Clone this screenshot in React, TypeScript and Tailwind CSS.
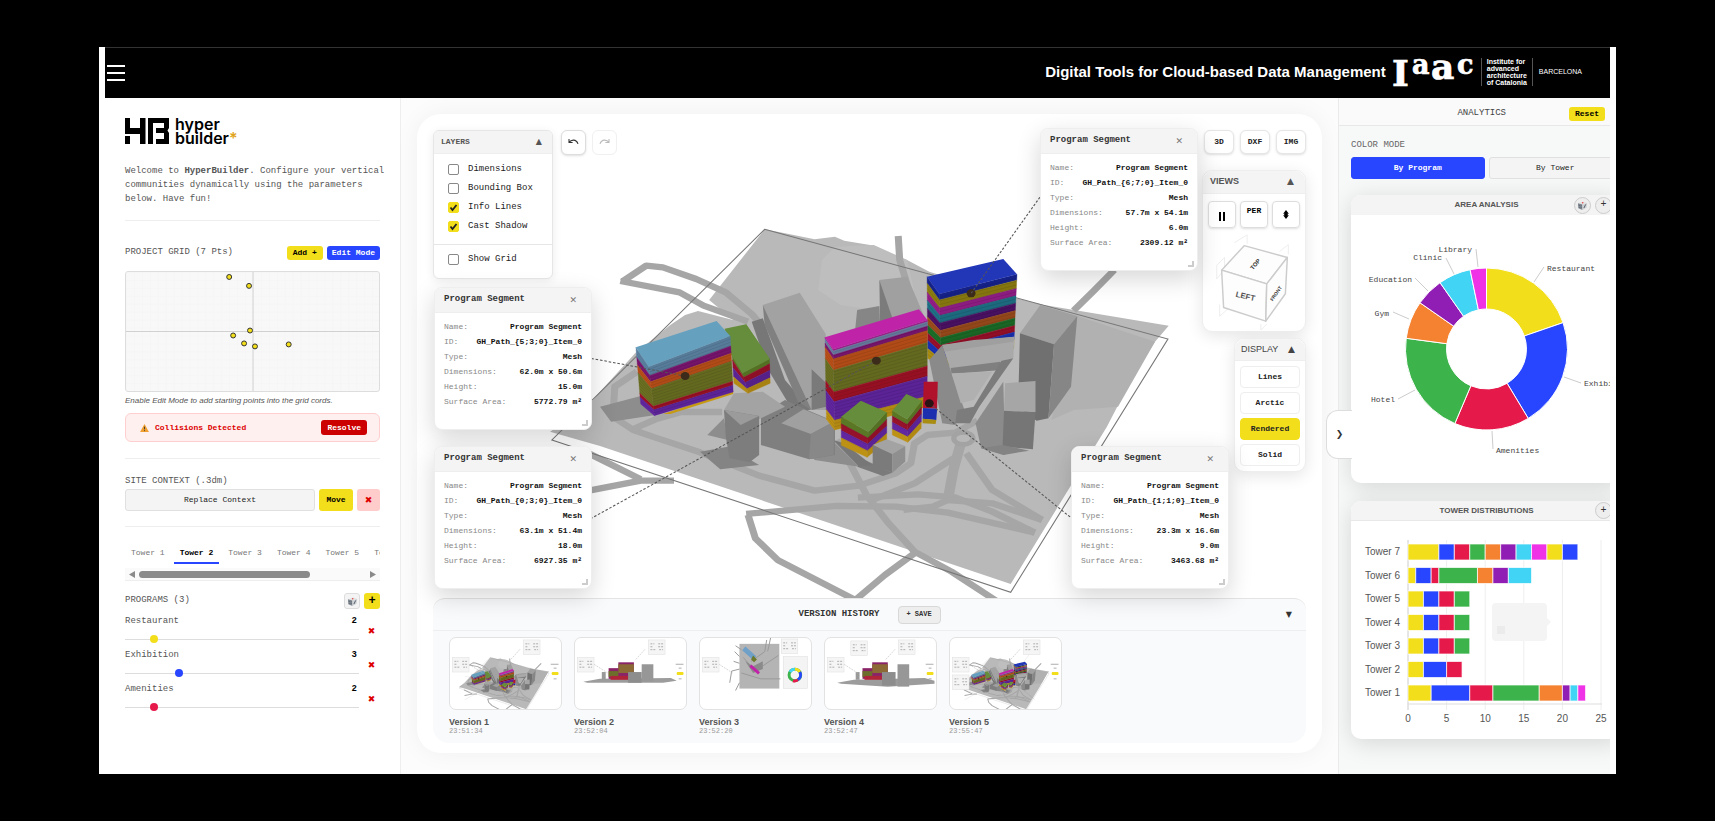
import { useState } from 'react'
import clsx from 'clsx'

type Pt = [number, number]

const COLORS = {
  yellow: '#f2de1b',
  blue: '#2846ff',
  red: '#e6194b',
  green: '#3cb44b',
  orange: '#f58231',
  purple: '#911eb4',
  cyan: '#42d4f4',
  magenta: '#f032e6',
}

const gridPoints: Pt[] = [
  [104, 5],
  [124, 14],
  [125, 59],
  [108, 64],
  [119, 72],
  [130, 75],
  [164, 73],
]

const programs = [
  { name: 'Restaurant', value: 2, thumb: '[&::-webkit-slider-thumb]:bg-[#f2de1b]' },
  { name: 'Exhibition', value: 3, thumb: '[&::-webkit-slider-thumb]:bg-[#2846ff]' },
  { name: 'Amenities', value: 2, thumb: '[&::-webkit-slider-thumb]:bg-[#e6194b]' },
]

const segments = [
  { id: 'GH_Path_{5;3;0}_Item_0', dimensions: '62.0m x 50.6m', height: '15.0m', area: '5772.79 m²', place: 'left-[17px] top-[173px]' },
  { id: 'GH_Path_{0;3;0}_Item_0', dimensions: '63.1m x 51.4m', height: '18.0m', area: '6927.35 m²', place: 'left-[17px] top-[332px]' },
  { id: 'GH_Path_{6;7;0}_Item_0', dimensions: '57.7m x 54.1m', height: '6.0m', area: '2309.12 m²', place: 'right-[124px] top-[14px]' },
  { id: 'GH_Path_{1;1;0}_Item_0', dimensions: '23.3m x 16.6m', height: '9.0m', area: '3463.68 m²', place: 'right-[93px] top-[332px]' },
]

const areas = [
  { name: 'Restaurant', degrees: 71, color: COLORS.yellow, line: [183, 67, 193, 52], x: 196, y: 56, anchor: 'start' },
  { name: 'Exhibition', degrees: 78, color: COLORS.blue, line: [213, 162, 230, 168], x: 233, y: 171, anchor: 'start' },
  { name: 'Amenities', degrees: 54, color: COLORS.red, line: [141, 216, 142, 234], x: 145, y: 238, anchor: 'start' },
  { name: 'Hotel', degrees: 74.6, color: COLORS.green, line: [64, 175, 47, 184], x: 44, y: 187, anchor: 'end' },
  { name: 'Gym', degrees: 27.2, color: COLORS.orange, line: [58, 104, 42, 97], x: 38, y: 101, anchor: 'end' },
  { name: 'Education', degrees: 20.2, color: COLORS.purple, line: [77, 76, 64, 63], x: 61, y: 67, anchor: 'end' },
  { name: 'Clinic', degrees: 23.3, color: COLORS.cyan, line: [103, 59, 95, 43], x: 91, y: 45, anchor: 'end' },
  { name: 'Library', degrees: 11.7, color: COLORS.magenta, line: [127, 52, 125, 34], x: 121, y: 37, anchor: 'end' },
] as const

const barColors = [COLORS.yellow, COLORS.blue, COLORS.red, COLORS.green, COLORS.orange, COLORS.purple, COLORS.cyan, COLORS.magenta]

const towers = [
  { name: 'Tower 7', values: [4, 2, 2, 2, 2, 2, 2, 2, 2, 2] },
  { name: 'Tower 6', values: [1, 2, 1, 5, 2, 2, 3] },
  { name: 'Tower 5', values: [2, 2, 2, 2] },
  { name: 'Tower 4', values: [2, 2, 2, 2] },
  { name: 'Tower 3', values: [2, 2, 2, 2] },
  { name: 'Tower 2', values: [2, 3, 2] },
  { name: 'Tower 1', values: [3, 5, 3, 6, 3, 1, 1, 1] },
]

const versions = [
  { name: 'Version 1', time: '23:51:34', view: 'iso' },
  { name: 'Version 2', time: '23:52:04', view: 'elevation' },
  { name: 'Version 3', time: '23:52:20', view: 'plan' },
  { name: 'Version 4', time: '23:52:47', view: 'elevation-wide' },
  { name: 'Version 5', time: '23:55:47', view: 'iso-full' },
]

function lerp(a: Pt, b: Pt, t: number): Pt {
  return [a[0] + (b[0] - a[0]) * t, a[1] + (b[1] - a[1]) * t]
}

function points(...list: Pt[]) {
  return list.map((p) => p.map((n) => Math.round(n * 10) / 10).join(',')).join(' ')
}

// A stacked building: left edge, front corner and right edge, each as [top, bottom]
function Tower({
  left,
  front,
  right,
  back,
  top,
  bands,
  floors = 0,
}: {
  left: [Pt, Pt]
  front: [Pt, Pt]
  right: [Pt, Pt]
  back: Pt
  top: string
  bands: [string, number][]
  floors?: number
}) {
  return (
    <g>
      {bands.map(([color, end], i) => {
        const start = i === 0 ? 0 : bands[i - 1][1]
        const l0 = lerp(left[0], left[1], start)
        const l1 = lerp(left[0], left[1], end)
        const f0 = lerp(front[0], front[1], start)
        const f1 = lerp(front[0], front[1], end)
        const r0 = lerp(right[0], right[1], start)
        const r1 = lerp(right[0], right[1], end)
        return (
          <g key={i} fill={color} stroke={color}>
            <polygon points={points(l0, f0, f1, l1)} />
            <polygon points={points(f0, r0, r1, f1)} />
          </g>
        )
      })}
      {Array.from({ length: floors }, (_, i) => {
        const t = (i + 1) / (floors + 1)
        return (
          <polyline
            key={i}
            points={points(lerp(left[0], left[1], t), lerp(front[0], front[1], t), lerp(right[0], right[1], t))}
            fill="none"
            stroke="#000"
            strokeOpacity="0.12"
            strokeWidth="2"
          />
        )
      })}
      <polygon points={points(front[0], right[0], right[1], front[1])} fill="#000" fillOpacity="0.06" />
      <polygon points={points(left[0], back, right[0], front[0])} fill={top} />
    </g>
  )
}

function SiteModel({ full = true }: { full?: boolean }) {
  return (
    <g transform="translate(600 210) scale(0.37 0.3333)">
      <polygon
        points="445,58 500,70 580,88 635,80 660,92 730,105 830,150 890,185 1125,265 1200,285 1537,347 1500,395 1440,500 1370,650 1110,1122 0,708 -135,665 -30,585 0,545 95,430 190,345 230,315 265,303 360,330 295,270"
        fill="#b9b9b9"
      />
      <polygon points="600,150 635,110 740,105 830,150 850,250 800,290 740,300 650,285 590,240" fill="#bebebe" />
      <polygon points="1290,318 1500,395 1400,590 1280,600 1220,630" fill="#b1b1b1" />
      <g fill="none" stroke="#a6a6a6" strokeWidth="19" strokeLinejoin="round">
        <polyline points="60,215 125,167 170,172 260,207 340,247 410,312 440,350" />
        <polyline points="55,213 215,247 280,287 400,335" />
        <polyline points="806,78 810,150 832,230 862,310" />
        <polyline points="1390,180 1335,242 1280,302" />
        <polyline points="100,485 40,530 35,620 90,660 150,683 270,727 430,797 580,842 700,827 800,790 840,760 850,700 885,675 960,668 1020,632" />
        <polyline points="90,657 150,628 220,606 330,606" />
        <polyline points="-40,725 110,808" />
        <polyline points="-30,842 110,812 200,812" />
        <polyline points="395,912 640,888 800,890 940,908 1175,968" />
        <polyline points="697,863 860,853 960,862 1060,905 1175,968" />
        <polyline points="400,915 420,985 480,1050 690,1170" />
        <polyline points="690,1170 770,1095 850,1030" />
        <polyline points="640,690 680,770 720,855 780,940 850,1025 950,1085 1070,1172" />
        <polyline points="975,700 955,780 940,870" strokeWidth="28" />
        <polyline points="990,730 1060,840 1195,930" />
        <polyline points="955,745 850,820 740,868" />
        <polyline points="940,870 900,890 820,900" />
        <polyline points="940,870 1060,880 1195,930" />
      </g>
      <ellipse cx="982" cy="685" rx="26" ry="18" fill="#b8b8b8" stroke="#a3a3a3" strokeWidth="14" />
      <polygon points="445,58 1535,387 1110,1147 -130,690" fill="none" stroke="#777" strokeWidth="3" />

      {/* cast shadows */}
      <g fill="#8d8d8d">
        <polygon points="0,590 110,558 150,615 30,635" />
        <polygon points="290,675 335,625 345,690" />
        <polygon points="270,725 345,710 430,765 325,778" fill="#848484" />
        <polygon points="635,700 700,770 580,750 565,720" />
        <polygon points="695,770 720,752 790,788 765,798" fill="#7b7b7b" />
        <polygon points="410,335 440,325 500,510 570,600 520,600 455,480" fill="#777" />
        <polygon points="630,690 660,700 735,765 700,770" fill="#777" />
      </g>

      {/* existing buildings */}
      <g>
        <polygon points="440,285 540,248 610,372 615,600 572,600" fill="#a2a2a2" />
        <polygon points="440,285 572,600 535,575 445,345" fill="#808080" />
        <polygon points="572,478 612,520 612,590 572,600" fill="#7a7a7a" />
        <polygon points="695,300 755,288 757,345 690,355" fill="#868686" />
        <polygon points="755,210 830,200 880,330 780,340" fill="#a0a0a0" />
        <polygon points="755,210 792,330 757,335" fill="#7b7b7b" />
        <polygon points="1135,370 1190,285 1290,318 1227,403" fill="#a0a0a0" />
        <polygon points="1135,370 1227,403 1212,625 1180,632 1130,590" fill="#707070" />
        <polygon points="1227,403 1290,318 1273,530 1212,625" fill="#868686" />
        <polygon points="1015,640 1090,515 1095,735 1030,715" fill="#8b8b8b" />
        <polygon points="1095,520 1177,513 1177,607 1092,602" fill="#a6a6a6" />
        <polygon points="1092,602 1177,607 1170,718 1088,710" fill="#767676" />
        <polygon points="1030,715 1088,705 1160,722 1090,735" fill="#838383" />
        <polygon points="435,615 500,570 560,600 635,635 635,735 565,748 435,705" fill="#7f7f7f" />
        <polygon points="490,640 550,598 632,635 570,672" fill="#a0a0a0" />
        <polygon points="570,672 632,635 632,735 565,748" fill="#888" />
        <polygon points="335,600 362,550 440,545 500,590 435,625 380,650" fill="#a3a3a3" />
        <polygon points="335,600 430,618 430,735 405,756 350,745 340,680" fill="#7d7d7d" />
        <polygon points="335,600 430,618 380,645" fill="#9b9b9b" />
      </g>

      <Tower
        left={[[357, 430], [362, 520]]}
        front={[[385, 488], [400, 550]]}
        right={[[458, 445], [460, 520]]}
        back={[395, 343]}
        top="#668d3b"
        bands={[['#5a7726', 0.22], ['#96122a', 0.48], ['#5b2391', 0.78], ['#b28a14', 1]]}
      />
      <polygon points="337,356 395,343 458,448 385,490 352,430" fill="#668d3b" />
      <polygon points="170,612 360,542 360,552 190,612" fill="#c79a14" />
      <Tower
        left={[[97, 412], [110, 582]]}
        front={[[132, 470], [147, 617]]}
        right={[[352, 378], [360, 546]]}
        back={[315, 333]}
        top="#66a0bf"
        bands={[['#5d84a4', 0.18], ['#7d1672', 0.31], ['#bb5019', 0.45], ['#6b7022', 0.81], ['#a01226', 0.88], ['#6126a0', 1]]}
        floors={17}
      />
      {full && (
        <>
          <Tower
            left={[[884, 200], [886, 445]]}
            front={[[917, 252], [922, 475]]}
            right={[[1127, 193], [1118, 415]]}
            back={[1090, 147]}
            top="#2236b8"
            bands={[
              ['#17248f', 0.08],
              ['#8d7d10', 0.19],
              ['#941e88', 0.29],
              ['#1f7086', 0.39],
              ['#4d1166', 0.49],
              ['#9c4c1c', 0.59],
              ['#1c6d28', 0.69],
              ['#9a102a', 0.78],
              ['#1b31b4', 0.88],
              ['#a98c12', 1],
            ]}
            floors={20}
          />
          <circle cx="1003" cy="250" r="12" fill="#3c2a1a" />
        </>
      )}

      {/* block behind the right tower */}
      <polygon points="925,405 1120,380 1117,445 1085,452 1082,478 948,482" fill="#a9a9a9" />
      <polygon points="925,405 1010,390 1120,380 1117,395 930,425" fill="#9f9f9f" />
      <polygon points="925,405 948,482 985,600 960,645 925,640 890,450" fill="#8a8a8a" />
      <polygon points="948,474 1082,455 1085,480 950,492" fill="#808080" />
      <polygon points="1085,452 1117,445 1025,590 1000,640 960,640 965,600 1010,590" fill="#7c7c7c" />
      <polygon points="950,490 1060,485 1010,570 975,580" fill="#b0b0b0" />

      <Tower
        left={[[608, 382], [612, 628]]}
        front={[[630, 418], [634, 660]]}
        right={[[885, 330], [884, 590]]}
        back={[862, 298]}
        top="#bf24a8"
        bands={[
          ['#a51e92', 0.02],
          ['#6c7fa4', 0.07],
          ['#7d1672', 0.12],
          ['#bb5019', 0.26],
          ['#6b7022', 0.53],
          ['#a01226', 0.65],
          ['#6126a0', 0.88],
          ['#bd9114', 1],
        ]}
        floors={24}
      />
      <g>
        <polygon points="875,515 913,515 911,596 873,594" fill="#b0122c" />
        <polygon points="873,594 911,596 909,630 872,626" fill="#1c2fae" />
        <polygon points="872,626 909,630 907,642 872,640" fill="#a98c12" />
      </g>
      <Tower
        left={[[652, 620], [652, 706]]}
        front={[[725, 665], [722, 742]]}
        right={[[775, 607], [775, 692]]}
        back={[705, 572]}
        top="#668d3b"
        bands={[['#5a7726', 0.25], ['#96122a', 0.48], ['#6126a0', 0.74], ['#bd9114', 1]]}
        floors={3}
      />
      <Tower
        left={[[790, 602], [790, 675]]}
        front={[[830, 628], [832, 697]]}
        right={[[870, 572], [868, 655]]}
        back={[828, 552]}
        top="#668d3b"
        bands={[['#5a7726', 0.22], ['#96122a', 0.48], ['#6126a0', 0.76], ['#bd9114', 1]]}
        floors={3}
      />
      <polygon points="737,705 775,688 825,708 790,732" fill="#a3a3a3" />
      <polygon points="737,705 790,732 790,788 737,765" fill="#7b7b7b" />
      <polygon points="790,732 825,708 825,755 790,788" fill="#8f8f8f" />

      <g fill="none" stroke="#555" strokeWidth="3" strokeDasharray="7 5">
        <line x1="230" y1="498" x2="-25" y2="445" />
        <line x1="747" y1="452" x2="-25" y2="926" />
        {full && <line x1="1003" y1="250" x2="1190" y2="-40" />}
        {full && <line x1="890" y1="580" x2="1276" y2="926" />}
      </g>
      <circle cx="230" cy="498" r="12" fill="#3c2a1a" />
      <circle cx="747" cy="452" r="12" fill="#3c2a1a" />
      {full && <circle cx="890" cy="580" r="12" fill="#2c1414" />}
    </g>
  )
}

function MiniCard({ x, y }: { x: number; y: number }) {
  return (
    <g>
      <rect x={x} y={y} width="17" height="15" fill="#f5f5f5" stroke="#ddd" strokeWidth="0.5" />
      <path d={`M${x + 2} ${y + 4}h4m4 0h5M${x + 2} ${y + 7}h3m5 0h5M${x + 2} ${y + 10}h5m4 0h4`} stroke="#999" strokeWidth="0.8" strokeDasharray="2 1" />
    </g>
  )
}

function Elevation({ wide }: { wide: boolean }) {
  return (
    <g transform={wide ? 'translate(4 0)' : undefined}>
      <polygon points={wide ? '8,46 25,43 98,41 108,44 108,47 60,50 12,47' : '8,45 25,42 98,41 104,44 90,46 60,46 12,46'} fill="#9c9c9c" />
      <rect x="27" y="35" width="4" height="8" fill="#999" />
      <rect x="34" y="31" width="11" height="11" fill="#8a2468" />
      <rect x="34" y="34" width="11" height="6" fill="#6d6d2c" />
      <rect x="44" y="25" width="16" height="17" fill="#8a2468" />
      <rect x="44" y="27" width="16" height="9" fill="#8b6a35" />
      <rect x="36" y="39" width="18" height="4" fill="#b0243a" />
      <rect x="54" y="35" width="14" height={wide ? 14 : 11} fill="#8d8d8d" />
      <rect x={wide ? 70 : 68} y="27" width="12" height={wide ? 23 : 18} fill="#979797" />
    </g>
  )
}

function Plan() {
  return (
    <g>
      <rect x="40" y="6" width="41" height="46" fill="#b4b4b4" />
      <path d="M35 14l5 5M36 8l6 4M34 24l6 2M32 34l8-2M32 34l-2 12M40 46l-4 8M68 2l-2 12-14 10M72 0l-3 14M42 36l20 6 20 0M44 20l12 14 24-16" fill="none" stroke="#999" />
      <path d="M46 24l8 5 10-5v8l-10 4z" fill="#8a8a8a" />
      <rect x="43" y="13" width="15" height="5" fill="#6fa0c8" transform="rotate(42 50 15)" />
      <path d="M54 18l4 4-3 3-3-3z" fill="#6d7a2c" />
      <rect x="50" y="31" width="12" height="3" fill="#c022a8" transform="rotate(42 56 32)" />
      <rect x="85" y="19" width="25" height="33" fill="#f4f4f4" stroke="#ddd" strokeWidth="0.5" />
      <g fill="none" strokeWidth="3">
        <circle cx="97" cy="38" r="6" stroke={COLORS.green} />
        <path d="M97 32a6 6 0 0 1 5 3" stroke={COLORS.yellow} />
        <path d="M102 35a6 6 0 0 1-2 8" stroke={COLORS.blue} />
        <path d="M100 43a6 6 0 0 1-5 1" stroke={COLORS.red} />
        <path d="M92 35a6 6 0 0 1 5-3" stroke={COLORS.cyan} />
      </g>
      <MiniCard x={83} y={1} />
    </g>
  )
}

function VersionPreview({ view }: { view: string }) {
  const iso = view === 'iso' || view === 'iso-full'
  return (
    <svg viewBox="0 0 113 73" className="block h-[71px] w-full" aria-hidden="true">
      {iso && (
        <g transform="scale(0.15) translate(-493 -96)">
          <SiteModel full={view === 'iso-full'} />
        </g>
      )}
      {view === 'plan' && <Plan />}
      {view === 'elevation' && <Elevation wide={false} />}
      {view === 'elevation-wide' && <Elevation wide />}
      <path d="M19 27l14 9M62 22l10-11" stroke="#bbb" strokeWidth="0.6" strokeDasharray="2 1" />
      <MiniCard x={2} y={20} />
      {view === 'iso-full' && <MiniCard x={2} y={38} />}
      {view === 'elevation-wide' && <MiniCard x={26} y={3} />}
      {view !== 'plan' && (
        <>
          <MiniCard x={75} y={2} />
          <rect x="104" y="35" width="7" height="3" rx="1" fill={COLORS.yellow} />
          <path d="M103 27h8M106 31h3M106 42h3" stroke="#aaa" />
        </>
      )}
    </svg>
  )
}

function DiceIcon() {
  return (
    <svg viewBox="0 0 12 12" className="size-[11px]" aria-hidden="true">
      <path d="M1 3.5 6.5 1.500 11 3 6 5z" fill="#e4e4e4" />
      <path d="M1 3.500 6 5 6 11 1.500 9z" fill="#7f8790" />
      <path d="M6 5 11 3 10.500 8.500 6 11z" fill="#d0d3d6" />
      <circle cx="6.200" cy="3" r="0.900" fill="#e04848" />
      <path d="M2.500 5.500v.8M4.500 8v.8M4.500 6v.6M2.500 8v.6M7.500 8.800l2-4" stroke="#4a5560" />
    </svg>
  )
}

function Logo() {
  return (
    <div className="flex items-center gap-[6px]">
      <svg viewBox="0 0 44 26" className="h-[26px] w-11" aria-label="HB">
        <path d="M0 0h5v10h10V0h5.500v26H15V16H0zM0 18h5v8H0z" />
        <path d="M23 0h21v10l-1.500 2.500 1.500 2.500v11H31v-5h8v-6h-8v-5h8V5H28v21h-5z" />
      </svg>
      <p className="font-[Inter,sans-serif] text-[16px] leading-[14px] font-semibold text-black">
        hyper
        <br />
        builder<span className="text-[#e0a51c]">*</span>
      </p>
    </div>
  )
}

function Header() {
  return (
    <header className="mx-[6px] flex h-[51px] shrink-0 items-center justify-between border-t border-[#333] bg-black font-['Liberation_Sans',sans-serif] text-white">
      <button type="button" aria-label="Menu" className="flex w-[20px] flex-col gap-[5px] pl-[2px]">
        <span className="h-[2px] w-[18px] bg-white" />
        <span className="h-[2px] w-[18px] bg-white" />
        <span className="h-[2px] w-[18px] bg-white" />
      </button>
      <div className="flex items-center pr-[28px] pb-[2px]">
        <h1 className="text-[15px] leading-[20px] font-bold">Digital Tools for Cloud-based Data Management</h1>
        <svg viewBox="0 0 86 44" className="ml-[6px] h-[44px] w-[86px]" fontFamily="DejaVu Serif, serif" fontWeight="700" fill="#fff" stroke="#fff" strokeWidth="0.700" aria-label="Iaac">
          <text x="0" y="36" fontSize="36">I</text>
          <text x="20" y="24" fontSize="27">a</text>
          <text x="39" y="29" fontSize="36">a</text>
          <text x="65" y="24" fontSize="27">c</text>
        </svg>
        <p className="ml-[3px] border-x border-[#555] px-[5px] text-[7px] leading-[7px] font-bold">
          Institute for
          <br />
          advanced
          <br />
          architecture
          <br />
          of Catalonia
        </p>
        <span className="ml-[6px] text-[7px]">BARCELONA</span>
      </div>
    </header>
  )
}

function Sidebar() {
  const [tower, setTower] = useState(2)
  return (
    <aside className="flex w-[296px] shrink-0 flex-col border-r border-[#eee] px-5 pt-[19px]">
      <Logo />
      <div className="mt-[19px] border-b border-[#eee] pb-[14px]">
        <p className="-mr-2 text-[9px] leading-[14px] text-[#555]">
          Welcome to <strong>HyperBuilder</strong>. Configure your vertical communities dynamically using the parameters below. Have fun!
        </p>
      </div>

      <section className="mt-[25px] border-b border-[#eee] pb-4">
        <div className="flex items-center gap-1">
          <h2 className="mr-auto text-[9px] text-[#555]">PROJECT GRID (7 Pts)</h2>
          <button type="button" className="h-[14px] rounded-[3px] bg-[#f2de1b] px-[6px] text-[8px] leading-none font-bold">
            Add +
          </button>
          <button type="button" className="h-[14px] rounded-[3px] bg-[#2846ff] px-[5px] text-[8px] leading-none font-bold text-white">
            Edit Mode
          </button>
        </div>
        <svg viewBox="0 0 255 120" className="mt-[11px] block w-full rounded-[3px] border border-[#ddd] bg-[#f8f8f8]">
          <defs>
            <pattern id="cells" width="8" height="8" patternUnits="userSpaceOnUse">
              <path d="M8 0H0V8" fill="none" stroke="#f3f3f3" />
            </pattern>
          </defs>
          <rect width="255" height="120" fill="url(#cells)" />
          <path d="M128 0V120M0 60H255" stroke="#d0d0d0" />
          {gridPoints.map(([x, y]) => (
            <circle key={`${x}-${y}`} cx={x} cy={y} r="2.500" fill="#f2de1b" stroke="#333" />
          ))}
        </svg>
        <p className="mt-1 font-['Liberation_Sans',sans-serif] text-[8px] leading-[10px] text-[#555] italic">
          Enable Edit Mode to add starting points into the grid cords.
        </p>
        <div className="mt-[7px] flex h-[29px] items-center rounded-[6px] border border-[#ffcfcf] bg-[#fff0f0] pr-3 pl-[14px]">
          <svg viewBox="0 0 10 9" className="h-[8px] w-[9px]" aria-hidden="true">
            <path d="M5 0 10 9H0z" fill="#f0a030" />
            <path d="M5 3v3M5 7v1" stroke="#333" />
          </svg>
          <span className="mr-auto ml-[6px] text-[8px] font-bold text-[#d00]">Collisions Detected</span>
          <button type="button" className="h-[15px] rounded-[3px] bg-[#cc0000] px-[6px] text-[8px] leading-none font-bold text-white">
            Resolve
          </button>
        </div>
      </section>

      <section className="mt-4 border-b border-[#eee] pb-[15px]">
        <h2 className="text-[9px] leading-[12px] text-[#555]">SITE CONTEXT (.3dm)</h2>
        <div className="mt-[2px] flex h-[22px] gap-1 text-[8px] leading-none">
          <button type="button" className="flex-1 rounded-[3px] border border-[#e0e0e0] bg-[#f4f4f4] text-[#222]">
            Replace Context
          </button>
          <button type="button" className="w-[34px] rounded-[3px] bg-[#f2de1b] font-bold">
            Move
          </button>
          <button type="button" aria-label="Remove context" className="w-[23px] rounded-[3px] bg-[#ffcccc] font-['DejaVu_Sans',sans-serif] text-[9px] text-[#d00]">
            ✖
          </button>
        </div>
      </section>

      <nav className="mt-[17px] border-b border-[#eee]">
        <div className="flex gap-[3px] overflow-hidden">
          {[1, 2, 3, 4, 5, 6].map((n) => (
            <button
              key={n}
              type="button"
              onClick={() => setTower(n)}
              className={clsx(
                'h-5 shrink-0 border-b-2 px-[6px] text-[8px] leading-none',
                tower === n ? 'border-[#2846ff] font-bold text-black' : 'border-transparent text-[#777]'
              )}
            >
              Tower {n}
            </button>
          ))}
        </div>
        <div className="mt-1 flex h-[12px] items-center bg-[#fafafa] px-1">
          <svg viewBox="0 0 6 7" className="h-[7px] w-[6px]" aria-hidden="true">
            <path d="M6 0v7L0 3.500z" fill="#8a8a8a" />
          </svg>
          <span className="ml-1 h-[7px] w-[171px] rounded-full bg-[#8a8a8a]" />
          <svg viewBox="0 0 6 7" className="ml-auto h-[7px] w-[6px]" aria-hidden="true">
            <path d="M0 0v7L6 3.500z" fill="#8a8a8a" />
          </svg>
        </div>
      </nav>

      <section className="mt-3">
        <div className="flex items-center gap-1">
          <h2 className="mr-auto text-[9px] text-[#555]">PROGRAMS (3)</h2>
          <button type="button" aria-label="Randomize programs" className="flex size-4 items-center justify-center rounded-[3px] border border-[#ddd] bg-[#f4f4f4]">
            <DiceIcon />
          </button>
          <button type="button" aria-label="Add program" className="size-4 rounded-[3px] bg-[#f2de1b] text-[12px] leading-none font-bold">
            +
          </button>
        </div>
        <ul className="mt-[3px]">
          {programs.map((program) => (
            <li key={program.name} className="flex h-[34px] items-center">
              <label className="block w-[234px] text-[9px] leading-[12px] text-[#555]">
                <span className="flex justify-between">
                  {program.name}
                  <b className="pr-[2px] text-black">{program.value}</b>
                </span>
                <input
                  type="range"
                  min="1"
                  max="10"
                  defaultValue={program.value}
                  className={clsx(
                    'mt-[9px] block h-2 w-full appearance-none bg-transparent [&::-webkit-slider-runnable-track]:h-px [&::-webkit-slider-runnable-track]:bg-[#ddd] [&::-webkit-slider-thumb]:-mt-1 [&::-webkit-slider-thumb]:size-2 [&::-webkit-slider-thumb]:appearance-none [&::-webkit-slider-thumb]:rounded-full',
                    program.thumb
                  )}
                />
              </label>
              <button type="button" aria-label={`Remove ${program.name}`} className="ml-auto w-[17px] pt-1 font-['DejaVu_Sans',sans-serif] text-[9px] leading-none text-[#d00]">
                ✖
              </button>
            </li>
          ))}
        </ul>
      </section>
    </aside>
  )
}

function SegmentCard({ segment }: { segment: (typeof segments)[number] }) {
  const rows = [
    ['Name:', 'Program Segment'],
    ['ID:', segment.id],
    ['Type:', 'Mesh'],
    ['Dimensions:', segment.dimensions],
    ['Height:', segment.height],
    ['Surface Area:', segment.area],
  ]
  return (
    <article className={clsx('absolute h-[143px] w-[158px] overflow-hidden rounded-[8px] border border-[#eee] bg-white shadow-[0_8px_24px_rgba(0,0,0,0.16)]', segment.place)}>
      <div className="flex h-[25px] items-center justify-between border-b border-[#eee] bg-[#f4f4f4] pr-[14px] pl-[9px]">
        <h3 className="text-[9px] font-semibold text-[#333]">Program Segment</h3>
        <button type="button" aria-label="Close" className="font-['DejaVu_Sans',sans-serif] text-[9px] leading-none text-[#777]">
          ✕
        </button>
      </div>
      <dl className="px-[9px] pt-[6px] text-[8px] leading-[15px]">
        {rows.map(([term, value]) => (
          <div key={term} className="flex justify-between">
            <dt className="text-[#888]">{term}</dt>
            <dd className="font-bold text-[#111]">{value}</dd>
          </div>
        ))}
      </dl>
      <span className="absolute right-[3px] bottom-[3px] size-[6px] border-r-2 border-b-2 border-[#ccc]" />
    </article>
  )
}

function LayersPanel() {
  const layers = [
    { name: 'Dimensions', on: false },
    { name: 'Bounding Box', on: false },
    { name: 'Info Lines', on: true },
    { name: 'Cast Shadow', on: true },
    { name: 'Show Grid', on: false },
  ]
  return (
    <section className="w-[120px] overflow-hidden rounded-[6px] border border-[#e6e6e6] bg-white shadow-[0_2px_10px_rgba(0,0,0,0.08)]">
      <div className="flex h-[23px] items-center justify-between border-b border-[#eee] bg-[#f4f4f4] pr-[10px] pl-[7px] text-[#555]">
        <h3 className="text-[8px] font-bold">LAYERS</h3>
        <span className="font-['DejaVu_Sans',sans-serif] text-[8px]">▲</span>
      </div>
      <div className="pt-[6px]">
        {layers.map((layer) => (
          <label
            key={layer.name}
            className={clsx(
              'flex items-center gap-[9px] px-[14px] text-[9px] text-[#222]',
              layer.name === 'Show Grid' ? 'mt-2 h-[34px] border-t border-[#e6e6e6] pb-1' : 'h-[19px]'
            )}
          >
            <span className="relative flex size-[11px]">
              <input type="checkbox" defaultChecked={layer.on} className="peer size-[11px] appearance-none rounded-[2px] border border-[#888] bg-white checked:border-[#f2de1b] checked:bg-[#f2de1b]" />
              <svg viewBox="0 0 11 11" className="pointer-events-none absolute inset-0 hidden peer-checked:block" aria-hidden="true">
                <path d="M2.500 5.500 4.500 8 8.500 3" fill="none" stroke="#222" strokeWidth="1.800" />
              </svg>
            </span>
            {layer.name}
          </label>
        ))}
      </div>
    </section>
  )
}

function ViewsPanel() {
  return (
    <section className="w-[104px] rounded-[10px] border border-[#eee] bg-white shadow-[0_4px_16px_rgba(0,0,0,0.1)]">
      <div className="flex h-[23px] items-center justify-between rounded-t-[10px] border-b border-[#eee] bg-[#f4f4f4] pr-[11px] pl-[7px] font-['Liberation_Sans',sans-serif] text-[9px] font-bold text-[#555]">
        <h3>VIEWS</h3>
        <span className="font-['DejaVu_Sans',sans-serif]">▲</span>
      </div>
      <div className="flex gap-1 px-[5px] pt-[7px]">
        <button type="button" aria-label="Pause" className="flex h-[27px] flex-1 items-center justify-center gap-[2px] rounded-[4px] border border-[#ddd] pt-1 shadow-sm">
          <span className="h-[9px] w-[2px] bg-black" />
          <span className="h-[9px] w-[2px] bg-black" />
        </button>
        <button type="button" className="h-[27px] flex-1 rounded-[4px] border border-[#ddd] pb-2 text-[8px] leading-none font-bold shadow-sm">
          PER
        </button>
        <button type="button" aria-label="Elevation" className="flex h-[27px] flex-1 items-center justify-center rounded-[4px] border border-[#ddd] shadow-sm">
          <svg viewBox="0 0 7 11" className="h-[9px] w-[6px]" aria-hidden="true">
            <path d="M3.500 0 7 4.500H4.500v2H7L3.500 11 0 6.500h2.500v-2H0z" />
            <circle cx="3.500" cy="5.500" r="2.200" />
          </svg>
        </button>
      </div>
      <svg viewBox="0 0 104 105" className="block w-full" aria-label="View cube">
        <g fill="none" stroke="#eee">
          <path d="M32 15 45 7v9M78 24l9-7v10M14 38l8-8v12l-8 10zM17 78v12l9-8M59 98v6l6-6" />
        </g>
        <g fill="#fdfdfd" stroke="#ccc" strokeWidth="1.500" strokeLinejoin="round">
          <path d="M42 18 86 30 65 57 19 43z" />
          <path d="M19 43 65 57 64 95 21 81z" />
          <path d="M65 57 86 30 84 67 64 95z" />
        </g>
        <g fontFamily="Liberation Sans, sans-serif" fontWeight="700" fill="#333">
          <text x="51" y="43" transform="rotate(-50 51 43)" fontSize="6">TOP</text>
          <text x="33" y="70" transform="rotate(13 33 70)" fontSize="8" fill="#555">LEFT</text>
          <text x="71" y="75" transform="rotate(-56 71 75)" fontSize="5">FRONT</text>
        </g>
      </svg>
    </section>
  )
}

function DisplayPanel() {
  const [mode, setMode] = useState('Rendered')
  return (
    <section className="w-[72px] rounded-[10px] border border-[#eee] bg-white shadow-[0_4px_16px_rgba(0,0,0,0.1)]">
      <div className="flex h-[22px] items-center justify-between rounded-t-[10px] border-b border-[#eee] bg-[#f4f4f4] pr-[10px] pl-[6px] font-['Liberation_Sans',sans-serif] text-[9px] text-[#444]">
        <h3 className="font-medium">DISPLAY</h3>
        <span className="font-['DejaVu_Sans',sans-serif]">▲</span>
      </div>
      <div className="flex flex-col gap-1 px-[5px] py-[5px]">
        {['Lines', 'Arctic', 'Rendered', 'Solid'].map((name) => (
          <button
            key={name}
            type="button"
            onClick={() => setMode(name)}
            className={clsx(
              'h-[22px] rounded-[4px] border text-[8px] leading-none font-bold text-[#222]',
              mode === name ? 'border-[#f2de1b] bg-[#f2de1b]' : 'border-[#eee] bg-white'
            )}
          >
            {name}
          </button>
        ))}
      </div>
    </section>
  )
}

function Viewport() {
  return (
    <div className="relative min-h-0 flex-1">
      <svg viewBox="417 114 905 484" preserveAspectRatio="xMidYMid slice" className="absolute inset-0 size-full" aria-label="Site model">
        <SiteModel />
      </svg>
      <div className="absolute top-4 left-4 flex items-start gap-2">
        <LayersPanel />
        <div className="flex gap-[6px]">
          <button type="button" aria-label="Undo" className="flex size-[25px] items-center justify-center rounded-[6px] border border-[#ddd] bg-white text-[#333] shadow-sm">
            <svg viewBox="0 0 12 10" className="h-[9px] w-[11px]" aria-hidden="true">
              <path d="M1 1v4h4M1 5C3.500 1.500 9 1 11 6.500" fill="none" stroke="currentColor" strokeWidth="1.200" />
            </svg>
          </button>
          <button type="button" aria-label="Redo" className="flex size-[25px] items-center justify-center rounded-[6px] border border-[#f0f0f0] bg-white text-[#bbb]">
            <svg viewBox="0 0 12 10" className="h-[9px] w-[11px]" aria-hidden="true">
              <path d="M11 1v4H7M11 5C8.500 1.500 3 1 1 6.500" fill="none" stroke="currentColor" strokeWidth="1.200" />
            </svg>
          </button>
        </div>
      </div>
      <div className="absolute top-4 right-4 flex flex-col items-end">
        <div className="mb-4 flex gap-[6px]">
          {['3D', 'DXF', 'IMG'].map((name) => (
            <button key={name} type="button" className="h-6 w-[30px] rounded-[6px] border border-[#e6e6e6] bg-white text-[8px] leading-none font-bold text-[#222] shadow-sm">
              {name}
            </button>
          ))}
        </div>
        <ViewsPanel />
        <div className="mt-[6px]">
          <DisplayPanel />
        </div>
      </div>
      {segments.map((segment) => (
        <SegmentCard key={segment.id} segment={segment} />
      ))}
    </div>
  )
}

function VersionHistory() {
  return (
    <section className="mx-4 mb-[10px] h-[145px] shrink-0 rounded-t-[12px] rounded-b-[16px] border-t border-[#e4e4e4] bg-[#f9fafb]">
      <div className="grid h-[32px] grid-cols-[1fr_auto_1fr] items-center border-b border-[#eee] px-[14px]">
        <span />
        <div className="flex items-center gap-[18px]">
          <h2 className="text-[9px] font-semibold text-[#333]">VERSION HISTORY</h2>
          <button type="button" className="h-[18px] w-[43px] rounded-[4px] border border-[#d8d8d8] bg-[#eee] text-[7px] leading-none font-bold text-[#333]">
            + SAVE
          </button>
        </div>
        <span className="justify-self-end font-['DejaVu_Sans',sans-serif] text-[8px] text-[#333]">▼</span>
      </div>
      <ul className="flex gap-3 px-4 pt-[6px]">
        {versions.map((version) => (
          <li key={version.name} className="w-[113px]">
            <div className="overflow-hidden rounded-[7px] border border-[#e2e2e2] bg-white">
              <VersionPreview view={version.view} />
            </div>
            <p className="mt-[7px] font-['Liberation_Sans',sans-serif] text-[9px] leading-[10px] font-bold text-[#555]">{version.name}</p>
            <p className="text-[7px] leading-[8px] text-[#999]">{version.time}</p>
          </li>
        ))}
      </ul>
    </section>
  )
}

function arc(start: number, end: number) {
  const at = (deg: number, r: number) => {
    const rad = ((deg - 90) * Math.PI) / 180
    return `${(135.5 + r * Math.cos(rad)).toFixed(2)} ${(134 + r * Math.sin(rad)).toFixed(2)}`
  }
  return `M${at(start, 81)}A81 81 0 0 1 ${at(end, 81)}L${at(end, 40)}A40 40 0 0 0 ${at(start, 40)}Z`
}

function AreaChart() {
  let angle = 0
  return (
    <svg viewBox="0 0 271 268" className="block w-full" aria-label="Area by program">
      {areas.map((area) => {
        const start = angle
        angle += area.degrees
        const [x1, y1, x2, y2] = area.line
        return (
          <g key={area.name}>
            <path d={arc(start, angle)} fill={area.color} stroke="#fff" />
            <line x1={x1} y1={y1} x2={x2} y2={y2} stroke="#ccc" />
            <text x={area.x} y={area.y} textAnchor={area.anchor} fontSize="8" fill="#444">
              {area.name}
            </text>
          </g>
        )
      })}
    </svg>
  )
}

function TowerChart() {
  const x0 = 57
  const unit = 7.72
  return (
    <svg viewBox="0 0 271 218" className="block w-full" fontFamily="Liberation Sans, sans-serif" fontSize="10" fill="#555" aria-label="Programs by tower">
      {[0, 5, 10, 15, 20, 25].map((n) => (
        <g key={n}>
          <line x1={x0 + n * unit} y1="19" x2={x0 + n * unit} y2="189" stroke={n === 0 ? '#ccc' : '#eee'} />
          <text x={x0 + n * unit} y="201" textAnchor="middle">
            {n}
          </text>
        </g>
      ))}
      <line x1={x0} y1="183" x2="251" y2="183" stroke="#ddd" />
      <path d="M145 82h47a4 4 0 0 1 4 4v11l4 4-4 4v11a4 4 0 0 1-4 4h-47a4 4 0 0 1-4-4V86a4 4 0 0 1 4-4z" fill="#f4f4f4" />
      <rect x="146" y="105" width="8" height="8" fill="#ebebeb" />
      {towers.map((tower, row) => {
        let used = 0
        const y = 23 + row * 23.5
        return (
          <g key={tower.name}>
            <text x="49" y={y + 11} textAnchor="end">
              {tower.name}
            </text>
            {tower.values.map((value, i) => {
              const x = x0 + used * unit
              used += value
              return <rect key={i} x={x} y={y} width={value * unit} height="16" fill={barColors[i % barColors.length]} stroke="#fff" strokeOpacity="0.7" />
            })}
          </g>
        )
      })}
    </svg>
  )
}

function Analytics() {
  const [mode, setMode] = useState('By Program')
  return (
    <aside className="relative w-[272px] shrink-0 border-l border-[#eaeaea] bg-[#f7f8f8]">
      <button type="button" aria-label="Collapse analytics" className="absolute top-[312px] -left-[13px] h-[49px] w-[26px] rounded-l-[12px] border border-r-0 border-[#ddd] bg-white font-['DejaVu_Sans',sans-serif] text-[9px] leading-none text-[#333]">
        ❯
      </button>
      <div className="h-full overflow-hidden">
        <div className="flex h-7 items-center justify-end border-b border-[#e8e8e8] bg-[#fafafa] pt-1 pr-[5px]">
          <h2 className="mr-[63px] text-[9px] font-medium text-[#444]">ANALYTICS</h2>
          <button type="button" className="h-[14px] w-9 rounded-[3px] bg-[#f2de1b] text-[8px] leading-none font-bold">
            Reset
          </button>
        </div>
        <div className="w-[283px] pl-3">
          <h3 className="pt-[13px] text-[9px] leading-[12px] font-medium text-[#666]">COLOR MODE</h3>
          <div className="mt-[6px] flex gap-1">
            {['By Program', 'By Tower'].map((name) => (
              <button
                key={name}
                type="button"
                onClick={() => setMode(name)}
                className={clsx(
                  'h-[22px] flex-1 rounded-[3px] border text-[8px] leading-none',
                  mode === name ? 'border-[#2846ff] bg-[#2846ff] font-bold text-white' : 'border-[#e0e0e0] bg-[#f4f4f4] text-[#222]'
                )}
              >
                {name}
              </button>
            ))}
          </div>
          <section className="mt-4 overflow-hidden rounded-[10px] bg-white shadow-[0_4px_24px_rgba(0,0,0,0.14)]">
            <div className="relative flex h-5 items-center justify-center bg-[#f4f4f4]">
              <h3 className="font-['Liberation_Sans',sans-serif] text-[8px] font-bold text-[#555]">AREA ANALYSIS</h3>
              <div className="absolute right-[10px] flex gap-1">
                <button type="button" aria-label="Randomize areas" className="flex size-[17px] items-center justify-center rounded-full border border-[#ccc] bg-[#eee]">
                  <DiceIcon />
                </button>
                <button type="button" aria-label="Expand area analysis" className="size-[17px] rounded-full border border-[#ccc] bg-[#eee] text-[10px] leading-none text-[#333]">
                  +
                </button>
              </div>
            </div>
            <AreaChart />
          </section>
          <section className="mt-[18px] overflow-hidden rounded-[10px] bg-white shadow-[0_4px_24px_rgba(0,0,0,0.14)]">
            <div className="relative flex h-5 items-center justify-center border-b border-[#e8e8e8] bg-[#f4f4f4]">
              <h3 className="font-['Liberation_Sans',sans-serif] text-[8px] font-bold text-[#555]">TOWER DISTRIBUTIONS</h3>
              <button type="button" aria-label="Expand tower distributions" className="absolute right-[10px] size-[17px] rounded-full border border-[#ccc] bg-[#eee] text-[10px] leading-none text-[#333]">
                +
              </button>
            </div>
            <TowerChart />
          </section>
        </div>
      </div>
    </aside>
  )
}

export default function App() {
  return (
    <div className="flex h-screen min-h-[821px] bg-black px-[99px] py-[47px] font-['Liberation_Mono',monospace]">
      <div className="flex min-w-0 flex-1 flex-col bg-white">
        <Header />
        <div className="flex min-h-0 flex-1 px-[6px]">
          <Sidebar />
          <main className="flex min-w-0 flex-1 bg-[#fcfcfc] px-4 pt-4 pb-[21px]">
            <div className="flex min-w-0 flex-1 flex-col rounded-[24px] bg-white shadow-[0_0_24px_rgba(0,0,0,0.05)]">
              <Viewport />
              <VersionHistory />
            </div>
          </main>
          <Analytics />
        </div>
      </div>
    </div>
  )
}
